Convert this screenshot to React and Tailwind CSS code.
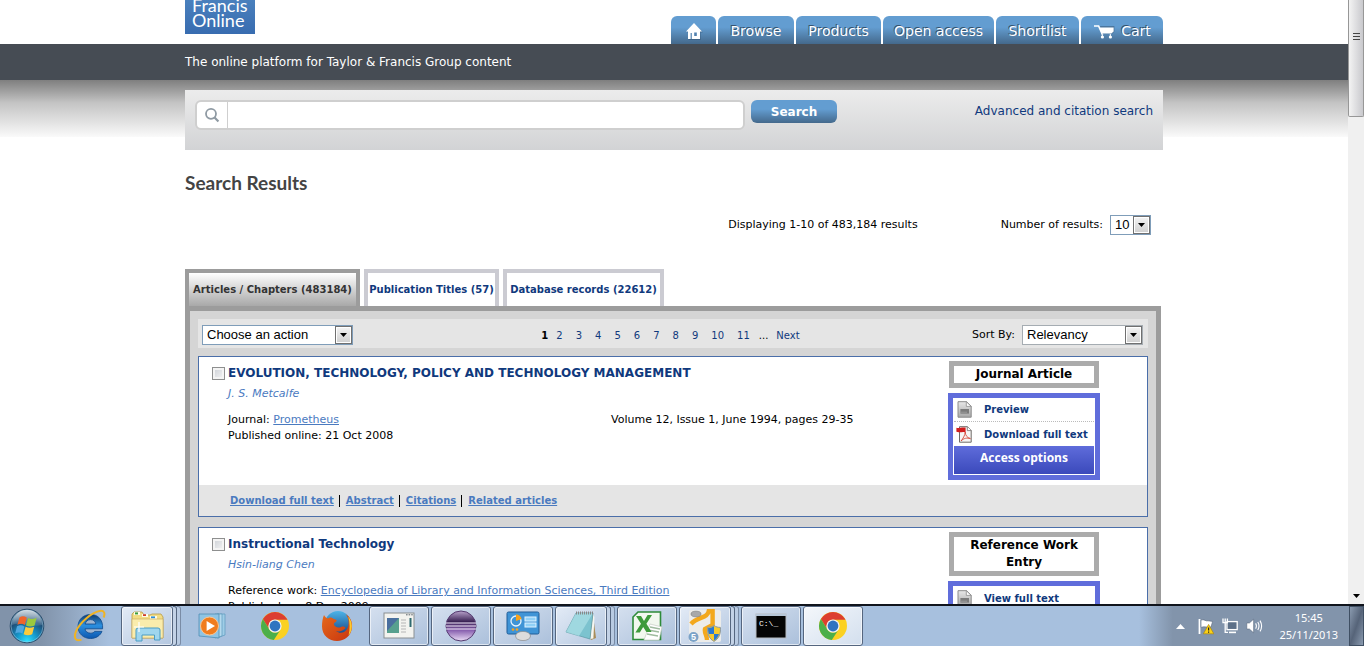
import React from "react";

const body = "font-['DejaVu_Sans','Verdana',sans-serif]";

/* ---------- small drawings ---------- */

function HomeIcon() {
  return (
    <svg width="18" height="18" viewBox="0 0 18 18" aria-hidden="true">
      <path d="M9.8 2.4 L17.8 10.6 H15.6 V18 H3.6 V10.6 H2 Z" fill="#2f4e6b" opacity="0.5" />
      <path d="M9 1 L17 9.4 H15 V17 H3 V9.4 H1 Z" fill="#fff" />
      <path d="M5.6 11 H6.8 V17 H5.6 Z M9.2 10.6 H11.8 V14 H9.2 Z" fill="#5181ae" />
    </svg>
  );
}

function CartIcon() {
  return (
    <svg width="22" height="16" viewBox="0 0 22 16" aria-hidden="true">
      <path d="M1 3 H5.6 L9.6 12" fill="none" stroke="#fff" strokeWidth="1.6" />
      <path d="M7 3 H21.4 V8.6 L19.2 10.6 H9.4 Z" fill="#33506b" opacity="0.5" />
      <path d="M6 4.4 H20.6 V8.4 L18.4 10.4 H8.8 Z" fill="#fff" />
      <path d="M9.4 11 V14 M17.4 11 V14" stroke="#dfe8f1" strokeWidth="1.2" />
      <circle cx="9.4" cy="14" r="1.6" fill="#fff" />
      <circle cx="17.4" cy="14" r="1.6" fill="#fff" />
    </svg>
  );
}

function GlassIcon() {
  return (
    <svg width="16" height="16" viewBox="0 0 16 16" fill="none" stroke="#8f9aa3" aria-hidden="true">
      <circle cx="7" cy="6.8" r="5" strokeWidth="1.8" />
      <path d="M10.6 10.4 L14.4 14.4" strokeWidth="2.2" />
    </svg>
  );
}

function DocIcon() {
  return (
    <svg width="16" height="17" viewBox="0 0 16 17" aria-hidden="true">
      <defs>
        <linearGradient id="docFill" x1="0" y1="0" x2="0" y2="1">
          <stop offset="0" stopColor="#e8e8e8" />
          <stop offset="1" stopColor="#a8a8a8" />
        </linearGradient>
      </defs>
      <path d="M2 0.7 H10.5 L15.2 5.2 V16.2 H2 Z" fill="url(#docFill)" stroke="#8c8c8c" />
      <path d="M10.3 0.7 V5.4 H15.2 Z" fill="#fff" stroke="#8c8c8c" strokeWidth="0.8" />
      <rect x="4.4" y="8" width="8.6" height="4.6" fill="#7b7b7b" />
      <path d="M4.4 11.2 H11" stroke="#a2a2a2" strokeWidth="0.8" />
    </svg>
  );
}

function PdfIcon() {
  return (
    <svg width="16" height="17" viewBox="0 0 16 17" aria-hidden="true">
      <path d="M3.5 0.7 H11.5 L15.2 4.4 V16.2 H3.5 Z" fill="#f7f5f4" stroke="#6f6a68" />
      <path d="M11.3 0.7 V4.6 H15.2" fill="#fff" stroke="#6f6a68" strokeWidth="0.8" />
      <path
        d="M5 15 C7 12.5 9 9.5 9.2 6 C9.4 9.4 11 11.6 14.4 12.6 C11 11.6 8 12 5 15 Z"
        fill="none"
        stroke="#d5483a"
        strokeWidth="0.9"
      />
      <path d="M0.4 1.8 C3 2.6 6 0.8 9.6 1.6 V6.2 C6 5.4 3 7 0.4 5.8 Z" fill="#d21d1d" />
    </svg>
  );
}

function StartOrb() {
  return (
    <svg width="36" height="36" viewBox="0 0 36 36" aria-hidden="true">
      <defs>
        <radialGradient id="orb" cx="0.5" cy="0.95" r="0.9">
          <stop offset="0" stopColor="#2fe0ff" />
          <stop offset="0.35" stopColor="#1596c9" />
          <stop offset="0.7" stopColor="#1d4f79" />
          <stop offset="1" stopColor="#5d7d98" />
        </radialGradient>
        <linearGradient id="orbGloss" x1="0" y1="0" x2="0" y2="1">
          <stop offset="0" stopColor="#fff" stopOpacity="0.7" />
          <stop offset="1" stopColor="#fff" stopOpacity="0.1" />
        </linearGradient>
      </defs>
      <circle cx="18" cy="18" r="16.8" fill="url(#orb)" stroke="#274a69" />
      <circle cx="18" cy="18" r="16" fill="none" stroke="#a8d3e8" strokeWidth="0.7" opacity="0.7" />
      <path d="M3 17 A15 15 0 0 1 33 17 C24 20 12 13 3 17 Z" fill="url(#orbGloss)" />
      <path d="M10.4 9.4 C13 7.8 15.4 8 17.8 9.6 L15.8 17 C13.4 15.4 11 15.6 8.4 16.8 Z" fill="#f0642a" />
      <path d="M19 10 C21.6 11.4 24.4 11.4 27.6 9.8 L25.6 17.4 C22.8 18.8 19.8 18.8 17 17.4 Z" fill="#9bc93d" />
      <path d="M8 18.2 C10.8 17 13.2 17 15.4 18.4 L13.4 25.6 C11 24.2 8.6 24.4 6.2 25.6 Z" fill="#4fa7e0" />
      <path d="M16.6 18.8 C19.4 20.2 22.2 20 25.2 18.8 L23.2 26.2 C20.4 27.6 17.4 27.6 14.6 26.2 Z" fill="#fccb3d" />
    </svg>
  );
}

function IeIcon() {
  return (
    <svg width="34" height="34" viewBox="0 0 34 34" aria-hidden="true">
      <defs>
        <linearGradient id="ieBlue" x1="0" y1="0" x2="0" y2="1">
          <stop offset="0" stopColor="#123a68" />
          <stop offset="0.45" stopColor="#2b8fdf" />
          <stop offset="1" stopColor="#0c58b0" />
        </linearGradient>
      </defs>
      <path
        d="M18.5 5.5 C11 5.5 6 11 6 17.6 C6 24.5 11.4 29.5 18.5 29.5 C24 29.5 28.2 26.6 30 22.4 H22.6 C21.8 23.6 20.6 24.2 18.6 24.2 C15.4 24.2 13.2 22.4 13 19.8 H30.6 C31.2 11 26.4 5.5 18.5 5.5 Z M13.2 15 C13.8 12.4 15.6 10.6 18.6 10.6 C21.6 10.6 23.4 12.4 23.8 15 Z"
        fill="url(#ieBlue)"
        stroke="#0f4a8d"
        strokeWidth="0.8"
      />
      <path
        d="M31.6 8.5 C33.4 4.4 32.4 1.2 27.6 2 C20 3.4 8 13 4 22.4 C1.6 28.4 3 33 9.4 30.6"
        fill="none"
        stroke="#f0b323"
        strokeWidth="2"
      />
    </svg>
  );
}

function ExplorerIcon() {
  return (
    <svg width="34" height="32" viewBox="0 0 34 32" aria-hidden="true">
      <path d="M2 4 L4 2 H12 L14 5 H20 L22 4 H31 L33 7 V28 H2 Z" fill="#f2dc84" stroke="#b89a48" strokeWidth="0.8" />
      <path d="M4 2 H10 V5 H4 Z" fill="#fffce8" />
      <path d="M5 2.4 H8 V4.4 H5 Z" fill="#3a9c3a" />
      <path d="M12 4 H18 V7 H12 Z" fill="#fffce8" />
      <path d="M13 4.2 H16 V6 H13 Z" fill="#cf3b2a" />
      <path d="M20 6 H27 V9 H20 Z" fill="#fffce8" />
      <path d="M21 6.4 H25 V8.2 H21 Z" fill="#2d8ed8" />
      <path d="M2 9 H33 V28 H2 Z" fill="#faecac" stroke="#c6a95b" strokeWidth="0.6" />
      <path d="M6 31 V20 Q6 18 8 18 H28 Q30 18 30 20 V30 H24.5 V25 H12 V31 Z" fill="#9fd6ee" stroke="#4a9cc4" />
      <path d="M9 12 V22 M4 17 H14" stroke="#fff" strokeWidth="1.2" />
    </svg>
  );
}

function PlayerIcon() {
  return (
    <svg width="32" height="28" viewBox="0 0 32 28" aria-hidden="true">
      <path d="M20 2 H28 V23 L20 26 Z" fill="#9fcde6" stroke="#5b98bb" strokeWidth="0.7" />
      <path d="M18 2 H25 V24 L18 26 Z" fill="#b5daee" stroke="#5b98bb" strokeWidth="0.7" />
      <path d="M2 2 H22 V26 L2 24 Z" fill="#8fc4e4" stroke="#4f8eb3" strokeWidth="0.8" />
      <circle cx="12.5" cy="14" r="9" fill="#f07c1e" stroke="#fbc590" />
      <path d="M9.6 9 L18 14 L9.6 19 Z" fill="#fff" />
    </svg>
  );
}

function ChromeIcon() {
  return (
    <svg width="30" height="30" viewBox="0 0 30 30" aria-hidden="true">
      <circle cx="15" cy="15" r="14" fill="#fbd122" />
      <path d="M2.9 8 A14 14 0 0 1 27.1 8 L27.4 8.8 H15 A6.6 6.6 0 0 0 9.2 18.2 Z" fill="#dc3e30" />
      <path d="M2.9 8 A14 14 0 0 0 13.8 29 L20.8 18.2 A6.6 6.6 0 0 1 9.2 18.2 Z" fill="#4caf4a" />
      <circle cx="15" cy="15" r="6.6" fill="#f3f3f3" />
      <circle cx="15" cy="15" r="5.4" fill="#2f74c0" />
    </svg>
  );
}

function FirefoxIcon() {
  return (
    <svg width="32" height="32" viewBox="0 0 32 32" aria-hidden="true">
      <defs>
        <linearGradient id="fox" x1="0" y1="0" x2="1" y2="1">
          <stop offset="0" stopColor="#e66a1b" />
          <stop offset="1" stopColor="#c8340f" />
        </linearGradient>
        <linearGradient id="globe" x1="0" y1="0" x2="0" y2="1">
          <stop offset="0" stopColor="#4cb4e8" />
          <stop offset="1" stopColor="#123a7c" />
        </linearGradient>
      </defs>
      <circle cx="17" cy="14" r="13" fill="url(#globe)" />
      <path
        d="M3 5 C4 7 5 8 7 8.4 C9 7 11 7.6 12.6 9 C14.6 9 16 10 15.6 11 C15 12.4 13 12.4 12.8 14 C13.4 17 17 18.4 20 17 C22 16 24 16.6 24.6 18 C22 21 18 22 15 21 C20 25 27 22 27.6 14 C28 9 26.4 6 24.4 4 C29.6 7 31.6 12 31 18 C29.8 26 23.6 31 16 31 C8 31 1 25 1 16.4 C1 12 1.6 8 3 5 Z"
        fill="url(#fox)"
      />
      <path d="M27.2 6.6 C32 12 32 20 27.6 25.6 C29 19 29 13 27.2 6.6 Z" fill="#fbcb2f" />
    </svg>
  );
}

function WindowIcon() {
  return (
    <svg width="32" height="28" viewBox="0 0 32 28" aria-hidden="true">
      <rect x="1" y="1" width="30" height="25" fill="#f3f3ef" stroke="#8a8f92" />
      <rect x="4" y="6" width="12" height="15" fill="#57a08e" />
      <path d="M4 6 H16 L4 19 Z" fill="#4a6f9e" />
      <path d="M18 8 H23 M18 11 H23 M18 14 H23 M18 17 H23 M18 20 H23" stroke="#b5b5b5" />
      <path d="M27.5 6 V15" stroke="#2f6a70" strokeWidth="2" />
      <path d="M23 2.8 H30" stroke="#58616a" strokeDasharray="1.6 1" />
    </svg>
  );
}

function EclipseIcon() {
  return (
    <svg width="34" height="34" viewBox="0 0 34 34" aria-hidden="true">
      <defs>
        <linearGradient id="ecl" x1="0" y1="0" x2="0" y2="1">
          <stop offset="0" stopColor="#b9a3cc" />
          <stop offset="0.35" stopColor="#3c2456" />
          <stop offset="0.65" stopColor="#8a62b0" />
          <stop offset="1" stopColor="#eadcf6" />
        </linearGradient>
      </defs>
      <circle cx="17" cy="17" r="15" fill="url(#ecl)" stroke="#54396f" />
      <path d="M2 14 H32 M2 17 H32 M2 20 H32" stroke="#efe6f8" strokeWidth="1.2" />
    </svg>
  );
}

function ControlPanelIcon() {
  return (
    <svg width="34" height="30" viewBox="0 0 34 30" aria-hidden="true">
      <rect x="1" y="1" width="32" height="22" rx="1.5" fill="#3f94d6" stroke="#205d97" />
      <circle cx="10" cy="10" r="5" fill="none" stroke="#eaf5fd" strokeWidth="1.3" />
      <path d="M10 10 V3.6 A6 6 0 0 1 15.6 8 Z" fill="#f6a21d" />
      <rect x="19" y="6" width="11" height="4" fill="#8fd0f7" stroke="#dff2ff" />
      <rect x="19" y="12" width="11" height="4" fill="#8fd0f7" stroke="#dff2ff" />
      <circle cx="7" cy="18.5" r="1.3" fill="#f6a21d" />
      <circle cx="11" cy="18.5" r="1.3" fill="#f6a21d" />
      <ellipse cx="17" cy="25" rx="7.5" ry="4.6" fill="#dcdcdc" stroke="#8b8b8b" strokeWidth="0.7" />
    </svg>
  );
}

function NotepadIcon() {
  return (
    <svg width="32" height="30" viewBox="0 0 32 30" aria-hidden="true">
      <path d="M11 2 L28 4 L31 27 L26 29 Z" fill="#a88d5a" />
      <path d="M28 3 L25 28 L28.4 27.6 L29.4 6 Z" fill="#f6f6f0" />
      <path d="M11 2 H28 L25 28 L1 21 Z" fill="#7cc3cf" stroke="#5c99a5" strokeWidth="0.7" />
      <path d="M11 2 H28 L14 25 L1 21 Z" fill="#aee1e7" opacity="0.7" />
      <path d="M11 2 H28" stroke="#888" strokeWidth="3" strokeDasharray="1 1" />
    </svg>
  );
}

function ExcelIcon() {
  return (
    <svg width="32" height="32" viewBox="0 0 32 32" aria-hidden="true">
      <path d="M7 2 H29.5 V29.5 H2 V7 Z" fill="#f2f8ef" stroke="#2e8b39" strokeWidth="1.6" />
      <path d="M19 14 L31 17 L28 30 H13 Z" fill="#fff" stroke="#c5ccc3" strokeWidth="0.7" />
      <path d="M17 20 L28 22 M16 24 L27 26 M19 17 L29 19" stroke="#9fbb9f" strokeWidth="1.3" />
      <path d="M5 6 H10 L13 11 L16.6 5 H21 L15.4 13.8 L20.6 22 H15.4 L12.2 17 L8.8 22.6 H4.4 L10 13.8 Z" fill="#3d9a3a" />
    </svg>
  );
}

function JavaToolIcon() {
  return (
    <svg width="34" height="34" viewBox="0 0 34 34" aria-hidden="true">
      <rect x="1" y="1" width="32" height="32" rx="2" fill="#ececea" />
      <path d="M3 15 C10 7 20 10 21 1 H24.6 V16 L17 20 C16 24 19 26 19 31" fill="none" stroke="#f3a81c" strokeWidth="4.4" />
      <ellipse cx="8" cy="5" rx="5" ry="2.8" fill="#a8a8a8" stroke="#777" strokeWidth="0.6" />
      <circle cx="5.5" cy="28" r="5" fill="#7ba3c8" />
      <text x="3" y="31.4" fontSize="9" fontFamily="Liberation Sans" fontWeight="bold" fill="#fff">
        5
      </text>
      <path
        d="M26 16.5 C28 18 30 18.4 32.4 18.4 C33 25 30.6 30 26 32.4 C21.4 30 19 25 19.6 18.4 C22 18.4 24 18 26 16.5 Z"
        fill="#f7cb2d"
        stroke="#8a98a5"
      />
      <path d="M26 17.2 C24 18.6 22.4 19 20.2 19 C20 21.4 20.2 23.2 21 25 H26 Z M26 25 H31 C30 28 28.4 30.2 26 31.6 Z" fill="#2b7ad1" />
    </svg>
  );
}

function ConsoleIcon() {
  return (
    <svg width="32" height="26" viewBox="0 0 32 26" aria-hidden="true">
      <rect x="1" y="1" width="30" height="24" fill="#050505" stroke="#b7bcc2" />
      <path d="M1 2 H31" stroke="#b7c7d8" strokeWidth="2" />
      <text x="4" y="12.5" fontSize="8" fontFamily="Liberation Mono" fill="#fff">
        C:\_
      </text>
    </svg>
  );
}

function FlagIcon() {
  return (
    <svg width="16" height="17" viewBox="0 0 16 17" aria-hidden="true">
      <path d="M1.5 1 V16" stroke="#fff" strokeWidth="1.8" />
      <path d="M3 2 C6 0.8 8 3.6 10 2.8 L14.6 3.4 L13 9 C9 9.6 6 8 3 9.4 Z" fill="#fff" stroke="#55657a" strokeWidth="0.6" />
      <path d="M10.6 6.4 L15.8 15.8 H5.4 Z" fill="#fcd116" stroke="#a88200" strokeWidth="0.6" />
      <path d="M10.6 9.4 V12.6 M10.6 13.6 V14.8" stroke="#222" strokeWidth="1.2" />
    </svg>
  );
}

function NetworkIcon() {
  return (
    <svg width="16" height="16" viewBox="0 0 16 16" fill="none" aria-hidden="true">
      <rect x="5" y="3.6" width="10.2" height="8" fill="#5d7088" stroke="#fff" strokeWidth="1.3" />
      <path d="M7 14.4 H14" stroke="#fff" strokeWidth="1.6" />
      <path d="M1 0.6 V4.6 H5.4 V0.6 M3.2 0.6 V14.4 H6" stroke="#fff" strokeWidth="1.3" />
    </svg>
  );
}

function SpeakerIcon() {
  return (
    <svg width="17" height="16" viewBox="0 0 17 16" fill="none" aria-hidden="true">
      <path d="M0.8 5 H3.4 L7.6 1.2 V14.8 L3.4 11 H0.8 Z" fill="#fff" stroke="#4d5d72" strokeWidth="0.5" />
      <path d="M9.6 5.4 Q11.2 8 9.6 10.6 M11.8 4 Q14.2 8 11.8 12 M14 2.6 Q17.2 8 14 13.4" stroke="#fff" strokeWidth="1.1" />
    </svg>
  );
}

function DownArrow() {
  return (
    <svg width="7" height="4" viewBox="0 0 7 4" aria-hidden="true">
      <path d="M0 0 H7 L3.5 4 Z" fill="#000" />
    </svg>
  );
}

/* ---------- controls ---------- */

function Dropdown({ id, label, options, width, border }) {
  return (
    <div className={`relative h-5 ${width}`}>
      <select
        id={id}
        aria-label={label}
        className={`block h-5 w-full appearance-none border bg-white pl-1 font-['Liberation_Sans',Arial,sans-serif] text-[13px] leading-4 text-black ${border}`}
      >
        {options.map((o) => (
          <option key={o}>{o}</option>
        ))}
      </select>
      <span className="pointer-events-none absolute inset-y-px right-px flex w-[17px] items-center justify-center border border-[#707070] bg-linear-to-b from-[#f4f4f4] to-[#cfcfcf] shadow-[inset_0_0_0_1px_#fff]">
        <DownArrow />
      </span>
    </div>
  );
}

const navItems = [
  { label: "Browse", width: "w-[76px]" },
  { label: "Products", width: "w-[85px]" },
  { label: "Open access", width: "w-[111px]" },
  { label: "Shortlist", width: "w-[83px]" },
  { label: "Cart", width: "w-[82px]", icon: <CartIcon /> },
];

function NavTab({ width, children, label }) {
  return (
    <a
      href="#"
      aria-label={label}
      className={`flex h-7 items-center justify-center gap-1.5 rounded-t-md bg-linear-to-b from-[#639dd1] from-40% to-[#44698c] pt-0.5 text-sm whitespace-nowrap text-white [text-shadow:-1px_-1px_0_#35536f] ${width}`}
    >
      {children}
    </a>
  );
}

function Header() {
  return (
    <header>
      <div className="mx-auto flex h-11 w-[978px] items-start justify-between overflow-hidden">
        <a
          href="#"
          className="flex h-[34px] w-[70px] flex-col justify-end overflow-hidden bg-linear-to-b from-[#4a80bd] to-[#386cb0] pb-1.5 pl-[7px] font-['Lato',sans-serif] text-lg leading-[15px] text-white"
        >
          <span>Francis</span>
          <span>Online</span>
        </a>
        <nav className="flex gap-0.5 pt-4">
          <NavTab width="w-[45px]" label="Home">
            <HomeIcon />
          </NavTab>
          {navItems.map((n) => (
            <NavTab key={n.label} width={n.width}>
              {n.icon}
              {n.label}
            </NavTab>
          ))}
        </nav>
      </div>
      <div className="bg-[#464c54]">
        <p className="mx-auto w-[978px] text-xs leading-9 text-white">
          The online platform for Taylor &amp; Francis Group content
        </p>
      </div>
    </header>
  );
}

function SearchBar() {
  return (
    <div className="h-[57px] bg-linear-to-b from-[#7f7f7f] via-[#c4c4c4] via-40% to-[#fafafa] pt-[10px]">
      <form className="mx-auto flex h-[60px] w-[978px] items-start bg-linear-to-b from-[#ececec] to-[#d2d3d5] px-[10px] pt-[10px]">
        <div className="mr-1.5 flex h-[30px] w-[550px] rounded-md border-2 border-[#cfcfcf] bg-white">
          <span className="flex w-[31px] items-center justify-center border-r border-[#cfcfcf]">
            <GlassIcon />
          </span>
          <input type="text" aria-label="Search text" className="min-w-0 flex-1 px-2 text-sm outline-none" />
        </div>
        <button
          type="submit"
          className="h-[23px] w-[86px] rounded-md bg-linear-to-b from-[#639dd1] from-40% to-[#44698c] text-xs font-bold text-white"
        >
          Search
        </button>
        <a href="#" className="ml-auto text-xs leading-[22px] text-[#10397d]">
          Advanced and citation search
        </a>
      </form>
    </div>
  );
}

const tabs = [
  { label: "Articles / Chapters (483184)", width: "w-[175px]", active: true },
  { label: "Publication Titles (57)", width: "w-[135px]" },
  { label: "Database records (22612)", width: "w-[161px]" },
];

function Tabs() {
  return (
    <div className="flex gap-1">
      {tabs.map((t) => (
        <a
          key={t.label}
          href="#"
          className={`flex h-[37px] items-center justify-center border-4 border-b-0 text-[10px] font-bold whitespace-nowrap ${t.width} ${
            t.active
              ? "border-[#9c9c9c] bg-linear-to-b from-white to-[#a9a9a9] text-[#333]"
              : "border-[#cbcbd2] bg-white text-[#10397d]"
          }`}
        >
          {t.label}
        </a>
      ))}
    </div>
  );
}

const pages = ["2", "3", "4", "5", "6", "7", "8", "9", "10", "11"];

function Toolbar() {
  return (
    <div className="flex h-[29px] items-center justify-between bg-[#e5e5e5] pt-[3px] pr-[5px] pl-1">
      <div className="flex flex-1">
        <Dropdown id="action" label="Action" options={["Choose an action"]} width="w-[151px]" border="border-[#7f9db9]" />
      </div>
      <nav className="mr-1 flex text-[10px] text-[#10397d]">
        <span className="mr-2 font-bold text-black">1</span>
        {pages.map((p) => (
          <a key={p} href="#" className="mr-[13px]">
            {p}
          </a>
        ))}
        <span className="mr-2 -ml-1 text-black">...</span>
        <a href="#">Next</a>
      </nav>
      <div className="flex flex-1 items-center justify-end gap-[7px]">
        <label htmlFor="sort" className="text-[11px]">
          Sort By:
        </label>
        <Dropdown id="sort" options={["Relevancy"]} width="w-[121px]" border="border-[#a5acb2]" />
      </div>
    </div>
  );
}

function Result({ id, title, author, source, sourceTitle, published, volume, kind, actions, access, links }) {
  return (
    <article className="border border-[#4a6ea9] bg-white">
      <div className="flex min-h-32 pt-1 pr-[47px] pl-[13px]">
        <input
          id={id}
          type="checkbox"
          className="mt-1.5 mr-[3px] size-[13px] shrink-0 appearance-none border border-[#8e8f8f] bg-linear-to-br from-[#cbcfd5] to-[#f6f6f6] shadow-[inset_0_0_0_2px_#f4f4f4] checked:bg-[#10397d]"
        />
        <div className="min-w-0 flex-1 text-[11px] leading-4">
          <h2 className="pt-1 text-[#10397d]">
            <label htmlFor={id} className="text-xs leading-4 font-bold">
              {title}
            </label>
          </h2>
          <p className="mt-1 text-[#4a7abf] italic">{author}</p>
          <div className="mt-[10px] flex">
            <p className={volume ? "w-[383px] shrink-0" : ""}>
              {source}:{" "}
              <a href="#" className="text-[#4a7abf] underline">
                {sourceTitle}
              </a>
            </p>
            {volume && <p>{volume}</p>}
          </div>
          <p>{published}</p>
        </div>
        <aside className="flex w-[152px] shrink-0 flex-col items-center gap-[5px] pb-[5px]">
          <div className="w-[150px] border-[5px] border-[#ababab] px-3 text-center text-xs leading-[17px] font-bold">
            {kind}
          </div>
          <div className="w-full border-[5px] border-[#606ddb] bg-white px-px pb-px">
            {actions.map((a, i) => (
              <a
                key={a.label}
                href="#"
                className={`flex h-6 items-center text-[10px] font-bold whitespace-nowrap text-[#10397d] ${
                  i < actions.length - 1 ? "border-b border-dotted border-[#bbb]" : ""
                }`}
              >
                <span className="w-[30px] pl-0.5">{a.icon}</span>
                {a.label}
              </a>
            ))}
            {access && (
              <a
                href="#"
                className="block bg-linear-to-b from-[#5f6cdb] to-[#3b49bb] pb-1 text-center font-['Open_Sans',sans-serif] text-xs leading-6 font-bold text-white"
              >
                {access}
              </a>
            )}
          </div>
        </aside>
      </div>
      <div className="flex h-[31px] items-center bg-[#e5e5e5] pl-[31px] text-[10px] leading-3 font-bold text-[#4a7abf]">
        {links.map((l, i) => (
          <a key={l} href="#" className={`underline ${i > 0 ? "ml-[5px] border-l border-black pl-[6px]" : ""}`}>
            {l}
          </a>
        ))}
      </div>
    </article>
  );
}

function Page() {
  return (
    <div className={`min-w-0 flex-1 bg-white text-black ${body}`}>
      <Header />
      <SearchBar />
      <main className="mx-auto w-[978px] pt-[34px]">
        <h1 className="font-['Lato',sans-serif] text-[19px] leading-6 font-bold text-[#444]">Search Results</h1>
        <div className="mt-5 flex h-5 items-center justify-end pr-3 text-[11px]">
          <p className="mr-[83px]">Displaying 1-10 of 483,184 results</p>
          <label htmlFor="count" className="mr-[7px]">
            Number of results:
          </label>
          <Dropdown id="count" options={["10"]} width="w-[41px]" border="border-[#7f9db9]" />
        </div>
        <div className="mt-[34px]">
          <Tabs />
        </div>
        <section className="mr-0.5 border-[5px] border-[#9c9c9c] bg-[#d5d5d5] p-2">
          <Toolbar />
          <div className="mt-2 flex flex-col gap-[10px]">
            <Result
              id="result-1"
              title="EVOLUTION, TECHNOLOGY, POLICY AND TECHNOLOGY MANAGEMENT"
              author="J. S. Metcalfe"
              source="Journal"
              sourceTitle="Prometheus"
              volume="Volume 12, Issue 1, June 1994, pages 29-35"
              published="Published online: 21 Oct 2008"
              kind="Journal Article"
              actions={[
                { label: "Preview", icon: <DocIcon /> },
                { label: "Download full text", icon: <PdfIcon /> },
              ]}
              access="Access options"
              links={["Download full text", "Abstract", "Citations", "Related articles"]}
            />
            <Result
              id="result-2"
              title="Instructional Technology"
              author="Hsin-liang Chen"
              source="Reference work"
              sourceTitle="Encyclopedia of Library and Information Sciences, Third Edition"
              published="Published on: 8 Dec 2009"
              kind="Reference Work Entry"
              actions={[{ label: "View full text", icon: <DocIcon /> }]}
              links={["View full text", "Citations"]}
            />
          </div>
        </section>
      </main>
    </div>
  );
}

function Scrollbar() {
  return (
    <div className="flex w-4 shrink-0 flex-col justify-between bg-[#f0f0f0]" aria-hidden="true">
      <div className="flex h-[117px] flex-col items-center gap-0.5 rounded-b-xs border border-t-0 border-[#979797] bg-linear-to-r from-[#f3f3f3] to-[#c9c9cd] pt-[33px]">
        <i className="h-px w-[7px] bg-[#444]" />
        <i className="h-px w-[7px] bg-[#444]" />
        <i className="h-px w-[7px] bg-[#444]" />
      </div>
      <div className="flex justify-center pb-1.5">
        <DownArrow />
      </div>
    </div>
  );
}

const tasks = [
  { name: "Internet Explorer", icon: <IeIcon />, state: "pinned" },
  { name: "Windows Explorer", icon: <ExplorerIcon />, state: "stacked" },
  { name: "Media Player", icon: <PlayerIcon />, state: "pinned" },
  { name: "Chrome", icon: <ChromeIcon />, state: "pinned" },
  { name: "Firefox", icon: <FirefoxIcon />, state: "pinned" },
  { name: "Application", icon: <WindowIcon />, state: "open" },
  { name: "Eclipse", icon: <EclipseIcon />, state: "open" },
  { name: "Control Panel", icon: <ControlPanelIcon />, state: "open" },
  { name: "Notepad", icon: <NotepadIcon />, state: "stacked" },
  { name: "Excel", icon: <ExcelIcon />, state: "open" },
  { name: "Tools", icon: <JavaToolIcon />, state: "stacked" },
  { name: "Command Prompt", icon: <ConsoleIcon />, state: "open" },
  { name: "Chrome window", icon: <ChromeIcon />, state: "active" },
];

const frame =
  "flex h-full items-center justify-center rounded-[3px] border border-[#55667f] shadow-[inset_0_0_0_1px_rgba(255,255,255,0.6)] bg-linear-to-br";

function TaskButton({ name, icon, state }) {
  if (state === "pinned") {
    return (
      <button type="button" aria-label={name} className="flex h-full w-[60px] items-center justify-center">
        {icon}
      </button>
    );
  }
  if (state === "stacked") {
    return (
      <button type="button" aria-label={name} className="flex h-full w-[60px]">
        <span className={`${frame} w-[53px] from-[#e3ebf6] to-[#b4c7e0]`}>{icon}</span>
        <span className="h-full w-1 rounded-r-[3px] border border-l-0 border-[#55667f] bg-[#c3d2e6]" />
        <span className="h-full w-1 rounded-r-[3px] border border-l-0 border-[#7a8ca6] bg-[#b9cbe2]" />
      </button>
    );
  }
  return (
    <button
      type="button"
      aria-label={name}
      className={`${frame} w-[60px] ${
        state === "active" ? "from-[#f4f7fb] to-[#d3dfee]" : "from-[#d5e0ef] to-[#abc0db]"
      }`}
    >
      {icon}
    </button>
  );
}

function Taskbar() {
  return (
    <footer className="flex h-[42px] shrink-0 items-stretch border-t-2 border-[#10141c] bg-linear-to-r from-[#8193aa] from-3% via-[#a7c0de] via-8% to-[#a7c0de]">
      <button type="button" aria-label="Start" className="mr-0.5 flex w-[57px] items-center justify-center pr-1">
        <StartOrb />
      </button>
      <div className="flex gap-0.5">
        {tasks.map((t) => (
          <TaskButton key={t.name} {...t} />
        ))}
      </div>
      <div className="ml-auto flex items-center bg-linear-to-r from-[#a7c0de] to-[#8294ab] to-15% pl-[37px]">
        <svg width="9" height="5" viewBox="0 0 9 5" className="mr-[13px]" aria-hidden="true">
          <path d="M0 5 L4.5 0 L9 5 Z" fill="#fff" />
        </svg>
        <div className="flex gap-2">
          <FlagIcon />
          <NetworkIcon />
          <SpeakerIcon />
        </div>
        <time className="mr-[11px] ml-4 text-center font-['Noto_Sans',sans-serif] text-[11px] leading-[17px] text-white">
          15:45
          <br />
          25/11/2013
        </time>
        <button
          type="button"
          aria-label="Show desktop"
          className="h-full w-[15px] border border-[#3f4f63] bg-linear-to-br from-[#8b9bb0] via-[#566479] to-[#8b9bb0]"
        />
      </div>
    </footer>
  );
}

export default function App() {
  return (
    <div className="flex h-screen flex-col bg-white pb-5">
      <div className="flex min-h-0 flex-1 overflow-hidden">
        <Page />
        <Scrollbar />
      </div>
      <Taskbar />
    </div>
  );
}
